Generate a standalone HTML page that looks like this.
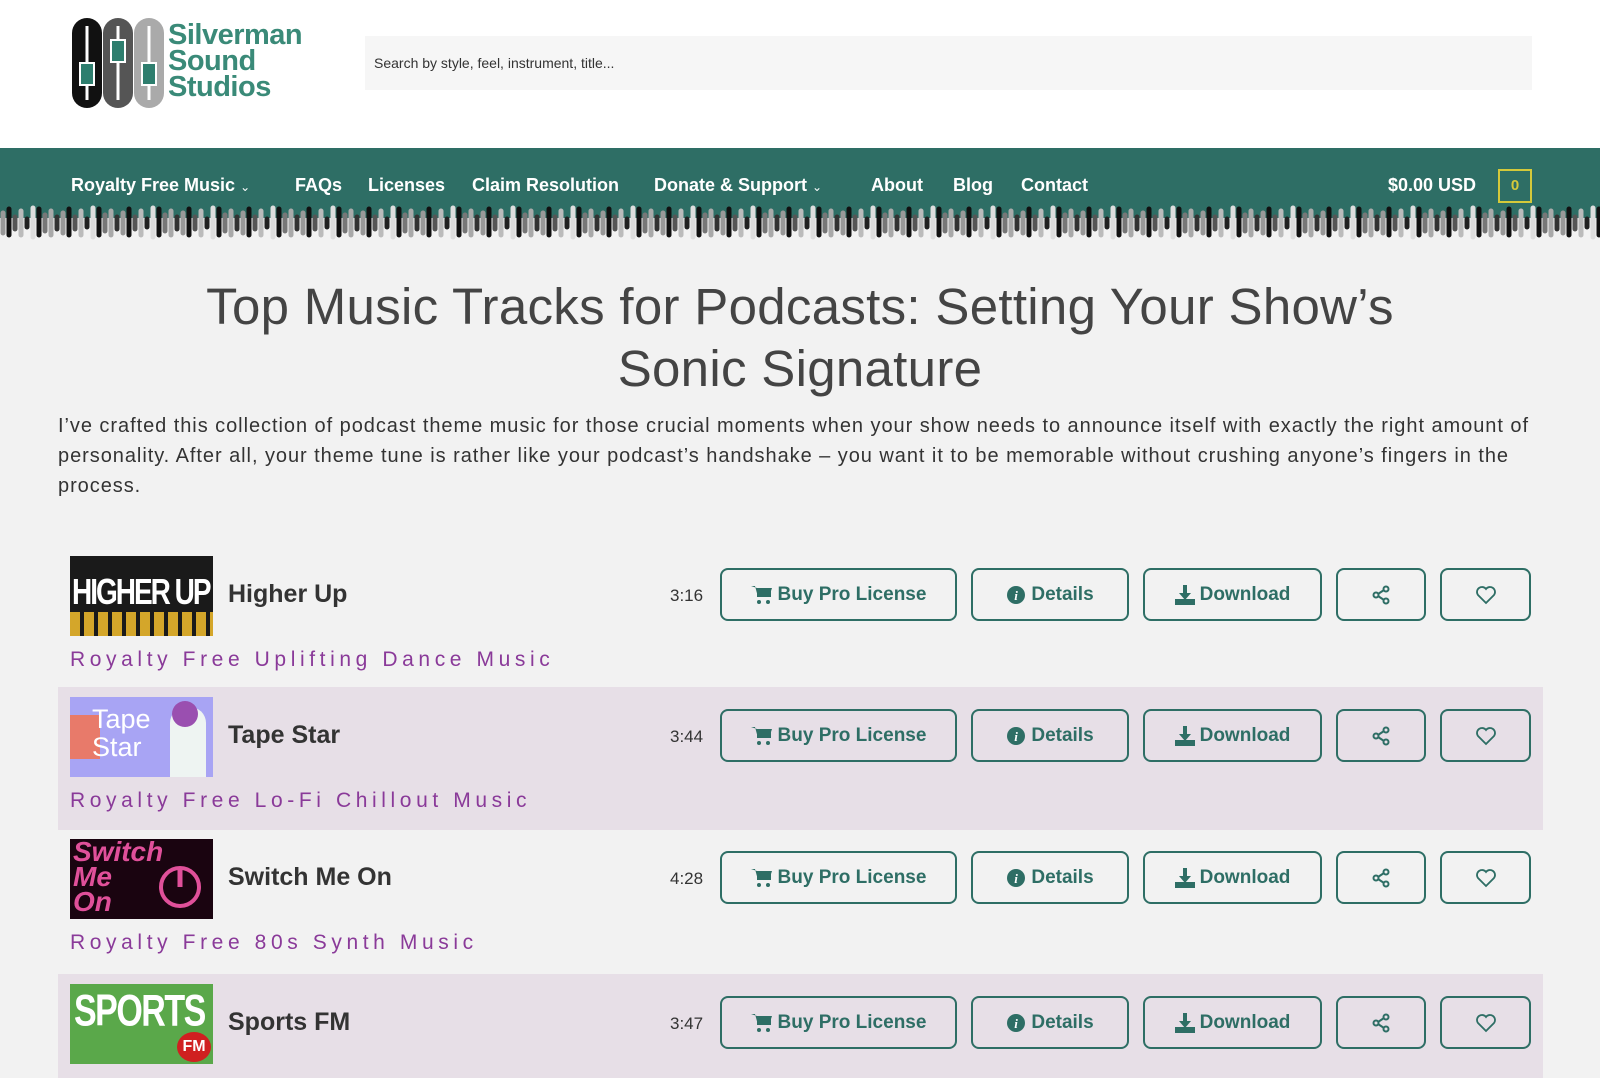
<!DOCTYPE html>
<html><head><meta charset="utf-8"><style>
*{box-sizing:border-box;margin:0;padding:0}
html,body{width:1600px;height:1078px;overflow:hidden}
body{background:#f2f2f2;font-family:"Liberation Sans",sans-serif;color:#333;position:relative}
.hdr{position:absolute;left:0;top:0;width:1600px;height:148px;background:#fff}
.search{position:absolute;left:365px;top:36px;width:1167px;height:54px;background:#f6f6f6;font-size:14px;color:#333;padding:19px 0 0 9px}
.nav{position:absolute;left:0;top:148px;width:1600px;height:70px;background:#2e6e65}
.nav a{position:absolute;top:27px;color:#fff;font-weight:bold;font-size:18px;text-decoration:none;white-space:nowrap}
.wave{position:absolute;left:0;top:205px}
h1{position:absolute;left:0;width:1600px;top:276px;text-align:center;font-weight:normal;font-size:51px;line-height:62px;color:#444;letter-spacing:0.3px}
.p{position:absolute;left:58px;top:411px;width:1520px;font-size:20px;line-height:30px;color:#333;letter-spacing:0.95px;white-space:nowrap}
.row{position:absolute;left:58px;width:1485px;height:143px}
.row.alt{background:#e7dfe7}
.th{position:absolute;left:12px;top:10px;width:143px;height:80px;overflow:hidden}
.tt{position:absolute;left:170px;top:34px;font-size:25px;font-weight:bold;color:#333}
.g{position:absolute;left:12px;top:102px;font-size:21px;letter-spacing:4.6px;color:#8a3a99}
.dur{position:absolute;left:612px;top:40px;font-size:17px;color:#333}
.b{position:absolute;top:22px;height:53px;border:2px solid #2e6e65;border-radius:8px;color:#2e6e65;font-size:19px;font-weight:bold;display:flex;align-items:center;justify-content:center;gap:5px}
.b svg{fill:#2e6e65}
.bs{position:absolute;left:58px;width:1485px;height:143px}
</style></head><body>
<div class="hdr">
<svg style="position:absolute;left:72px;top:18px" width="92" height="90" viewBox="0 0 92 90">
<rect x="0" y="0" width="30" height="90" rx="15" fill="#111"/>
<rect x="31" y="0" width="30" height="90" rx="15" fill="#555"/>
<rect x="62" y="0" width="30" height="90" rx="15" fill="#aaa"/>
<g stroke="#fff" stroke-width="3" fill="none"><path d="M15 8V82M46 8V82M77 8V82"/></g>
<rect x="8" y="45" width="14" height="22" fill="#2e7e6e" stroke="#fff" stroke-width="2"/>
<rect x="39" y="22" width="14" height="22" fill="#2e7e6e" stroke="#fff" stroke-width="2"/>
<rect x="70" y="45" width="14" height="22" fill="#2e7e6e" stroke="#fff" stroke-width="2"/>
</svg>
<div style="position:absolute;left:168px;top:22px;font-size:29px;line-height:26px;font-weight:bold;color:#3a8a78;letter-spacing:-0.5px">Silverman<br>Sound<br>Studios</div>
<div class="search">Search by style, feel, instrument, title...</div>
</div>
<div class="nav">
<a style="left:71px">Royalty Free Music <span style="font-size:12px;font-weight:normal">&#8964;</span></a>
<a style="left:295px">FAQs</a>
<a style="left:368px">Licenses</a>
<a style="left:472px">Claim Resolution</a>
<a style="left:654px">Donate &amp; Support <span style="font-size:12px;font-weight:normal">&#8964;</span></a>
<a style="left:871px">About</a>
<a style="left:953px">Blog</a>
<a style="left:1021px">Contact</a>
<a style="left:1388px">$0.00 USD</a>
<div style="position:absolute;left:1498px;top:21px;width:34px;height:34px;border:2px solid #d4c93a;color:#d4c93a;font-weight:bold;font-size:15px;text-align:center;line-height:30px">0</div>
</div>
<svg class="wave" width="1600" height="36">
<defs><pattern id="w" width="60" height="36" patternUnits="userSpaceOnUse">
<g stroke-linecap="round" stroke-width="5">
<line x1="3" y1="8" x2="3" y2="28" stroke="#999"/>
<line x1="9" y1="4" x2="9" y2="30" stroke="#111"/>
<line x1="15" y1="12" x2="15" y2="24" stroke="#555"/>
<line x1="21" y1="6" x2="21" y2="30" stroke="#bbb"/>
<line x1="27" y1="14" x2="27" y2="22" stroke="#222"/>
<line x1="33" y1="3" x2="33" y2="32" stroke="#ddd"/>
<line x1="39" y1="4" x2="39" y2="30" stroke="#111"/>
<line x1="45" y1="10" x2="45" y2="26" stroke="#777"/>
<line x1="51" y1="6" x2="51" y2="30" stroke="#aaa"/>
<line x1="57" y1="12" x2="57" y2="24" stroke="#333"/>
</g></pattern></defs>
<rect width="1600" height="36" fill="url(#w)"/>
</svg>
<h1>Top Music Tracks for Podcasts: Setting Your Show’s<br>Sonic Signature</h1>
<div class="p">I’ve crafted this collection of podcast theme music for those crucial moments when your show needs to announce itself with exactly the right amount of<br>personality. After all, your theme tune is rather like your podcast’s handshake – you want it to be memorable without crushing anyone’s fingers in the<br>process.</div>

<div class="row" style="top:546px">
<div class="th" style="background:#1a1a1a"><div style="color:#fff;font-size:28px;font-weight:bold;letter-spacing:-2px;padding:12px 2px 0;transform:scaleY(1.3);transform-origin:top">HIGHER UP</div><div style="position:absolute;bottom:0;left:0;right:0;height:24px;background:repeating-linear-gradient(90deg,#d4a62a 0 10px,#1a1a1a 10px 14px)"></div></div>
<div class="tt">Higher Up</div><div class="dur">3:16</div><div class="g">Royalty Free Uplifting Dance Music</div>
</div>
<div class="row alt" style="top:687px">
<div class="th" style="background:#a8a4f4"><div style="position:absolute;left:0;top:18px;width:30px;height:44px;background:#e87a6a"></div><div style="position:absolute;left:22px;top:8px;color:#fff;font-size:27px;line-height:28px">Tape<br>Star</div><div style="position:absolute;left:100px;top:10px;width:36px;height:70px;background:#eef4f2;border-radius:16px 16px 0 0"></div><div style="position:absolute;left:102px;top:4px;width:26px;height:26px;background:#9a4fb0;border-radius:50%"></div></div>
<div class="tt">Tape Star</div><div class="dur">3:44</div><div class="g">Royalty Free Lo-Fi Chillout Music</div>
</div>
<div class="row" style="top:829px">
<div class="th" style="background:#1a0410"><div style="position:absolute;left:3px;top:0;color:#e0509a;font-size:28px;line-height:25px;font-weight:bold;font-style:italic">Switch<br>Me<br>On</div><svg style="position:absolute;left:86px;top:24px" width="48" height="48"><circle cx="24" cy="24" r="19" fill="none" stroke="#e0509a" stroke-width="4"/><path d="M24 4V24" stroke="#e0509a" stroke-width="5"/></svg></div>
<div class="tt">Switch Me On</div><div class="dur">4:28</div><div class="g">Royalty Free 80s Synth Music</div>
</div>
<div class="row alt" style="top:974px">
<div class="th" style="background:#5aa84a"><div style="color:#fff;font-size:34px;font-weight:bold;letter-spacing:-1.5px;padding:2px 4px 0;transform:scaleY(1.3);transform-origin:top">SPORTS</div><div style="position:absolute;right:2px;bottom:2px;width:34px;height:30px;border-radius:50%;background:#d02020;color:#fff;font-weight:bold;font-size:16px;text-align:center;line-height:30px">FM</div></div>
<div class="tt">Sports FM</div><div class="dur">3:47</div>
</div>

<div class="bs" style="top:546px">
<div class="b" style="left:662px;width:237px"><svg width="22" height="20" viewBox="0 0 22 20"><path d="M0 1h4l3 11h11l3-9H6"/><rect x="6" y="3" width="14" height="9"/><circle cx="8" cy="17" r="2"/><circle cx="17" cy="17" r="2"/></svg>Buy Pro License</div>
<div class="b" style="left:913px;width:158px"><svg width="20" height="20"><circle cx="10" cy="10" r="9"/><text x="10" y="15" fill="#fff" font-size="13" font-weight="bold" font-style="italic" text-anchor="middle" font-family="Liberation Serif">i</text></svg>Details</div>
<div class="b" style="left:1085px;width:179px"><svg width="20" height="20"><path d="M8 0h4v8h4l-6 7-6-7h4z"/><rect x="0" y="14" width="20" height="6"/></svg>Download</div>
<div class="b" style="left:1278px;width:90px"><svg width="20" height="20" style="fill:none;stroke:#2e6e65;stroke-width:2"><circle cx="15" cy="4" r="2.5"/><circle cx="5" cy="10" r="2.5"/><circle cx="15" cy="16" r="2.5"/><path d="M7 9l6-4M7 11l6 4"/></svg></div>
<div class="b" style="left:1382px;width:91px"><svg width="22" height="20" style="fill:none;stroke:#2e6e65;stroke-width:1.8"><path d="M11 18L3 10a4.5 4.5 0 0 1 8-6a4.5 4.5 0 0 1 8 6z"/></svg></div>
</div>
<div class="bs" style="top:687px">
<div class="b" style="left:662px;width:237px"><svg width="22" height="20" viewBox="0 0 22 20"><path d="M0 1h4l3 11h11l3-9H6"/><rect x="6" y="3" width="14" height="9"/><circle cx="8" cy="17" r="2"/><circle cx="17" cy="17" r="2"/></svg>Buy Pro License</div>
<div class="b" style="left:913px;width:158px"><svg width="20" height="20"><circle cx="10" cy="10" r="9"/><text x="10" y="15" fill="#fff" font-size="13" font-weight="bold" font-style="italic" text-anchor="middle" font-family="Liberation Serif">i</text></svg>Details</div>
<div class="b" style="left:1085px;width:179px"><svg width="20" height="20"><path d="M8 0h4v8h4l-6 7-6-7h4z"/><rect x="0" y="14" width="20" height="6"/></svg>Download</div>
<div class="b" style="left:1278px;width:90px"><svg width="20" height="20" style="fill:none;stroke:#2e6e65;stroke-width:2"><circle cx="15" cy="4" r="2.5"/><circle cx="5" cy="10" r="2.5"/><circle cx="15" cy="16" r="2.5"/><path d="M7 9l6-4M7 11l6 4"/></svg></div>
<div class="b" style="left:1382px;width:91px"><svg width="22" height="20" style="fill:none;stroke:#2e6e65;stroke-width:1.8"><path d="M11 18L3 10a4.5 4.5 0 0 1 8-6a4.5 4.5 0 0 1 8 6z"/></svg></div>
</div>
<div class="bs" style="top:829px">
<div class="b" style="left:662px;width:237px"><svg width="22" height="20" viewBox="0 0 22 20"><path d="M0 1h4l3 11h11l3-9H6"/><rect x="6" y="3" width="14" height="9"/><circle cx="8" cy="17" r="2"/><circle cx="17" cy="17" r="2"/></svg>Buy Pro License</div>
<div class="b" style="left:913px;width:158px"><svg width="20" height="20"><circle cx="10" cy="10" r="9"/><text x="10" y="15" fill="#fff" font-size="13" font-weight="bold" font-style="italic" text-anchor="middle" font-family="Liberation Serif">i</text></svg>Details</div>
<div class="b" style="left:1085px;width:179px"><svg width="20" height="20"><path d="M8 0h4v8h4l-6 7-6-7h4z"/><rect x="0" y="14" width="20" height="6"/></svg>Download</div>
<div class="b" style="left:1278px;width:90px"><svg width="20" height="20" style="fill:none;stroke:#2e6e65;stroke-width:2"><circle cx="15" cy="4" r="2.5"/><circle cx="5" cy="10" r="2.5"/><circle cx="15" cy="16" r="2.5"/><path d="M7 9l6-4M7 11l6 4"/></svg></div>
<div class="b" style="left:1382px;width:91px"><svg width="22" height="20" style="fill:none;stroke:#2e6e65;stroke-width:1.8"><path d="M11 18L3 10a4.5 4.5 0 0 1 8-6a4.5 4.5 0 0 1 8 6z"/></svg></div>
</div>
<div class="bs" style="top:974px">
<div class="b" style="left:662px;width:237px"><svg width="22" height="20" viewBox="0 0 22 20"><path d="M0 1h4l3 11h11l3-9H6"/><rect x="6" y="3" width="14" height="9"/><circle cx="8" cy="17" r="2"/><circle cx="17" cy="17" r="2"/></svg>Buy Pro License</div>
<div class="b" style="left:913px;width:158px"><svg width="20" height="20"><circle cx="10" cy="10" r="9"/><text x="10" y="15" fill="#fff" font-size="13" font-weight="bold" font-style="italic" text-anchor="middle" font-family="Liberation Serif">i</text></svg>Details</div>
<div class="b" style="left:1085px;width:179px"><svg width="20" height="20"><path d="M8 0h4v8h4l-6 7-6-7h4z"/><rect x="0" y="14" width="20" height="6"/></svg>Download</div>
<div class="b" style="left:1278px;width:90px"><svg width="20" height="20" style="fill:none;stroke:#2e6e65;stroke-width:2"><circle cx="15" cy="4" r="2.5"/><circle cx="5" cy="10" r="2.5"/><circle cx="15" cy="16" r="2.5"/><path d="M7 9l6-4M7 11l6 4"/></svg></div>
<div class="b" style="left:1382px;width:91px"><svg width="22" height="20" style="fill:none;stroke:#2e6e65;stroke-width:1.8"><path d="M11 18L3 10a4.5 4.5 0 0 1 8-6a4.5 4.5 0 0 1 8 6z"/></svg></div>
</div>
</body></html>
